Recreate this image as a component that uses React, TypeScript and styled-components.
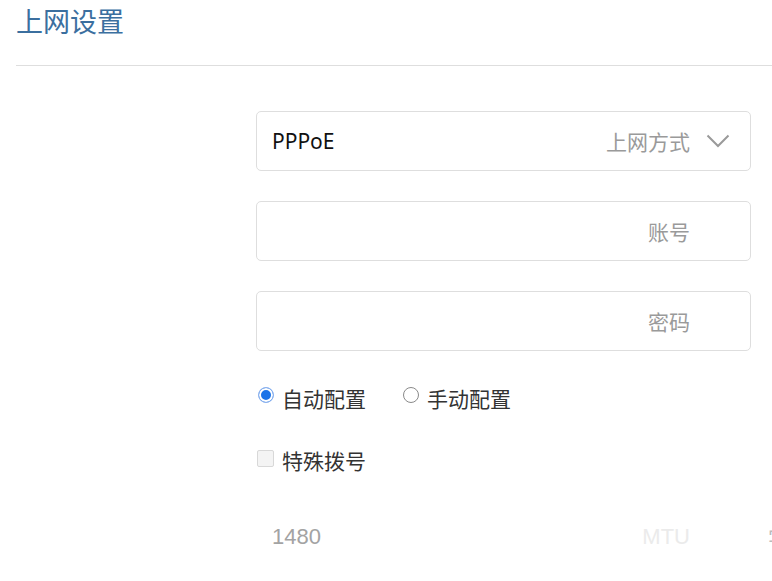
import styled, { createGlobalStyle } from "styled-components";

const GlobalStyle = createGlobalStyle`
  html, body {
    margin: 0;
    padding: 0;
    background: #fff;
    overflow: hidden;
  }
  body {
    font-family: "Noto Sans", "Noto Sans CJK SC", sans-serif;
    color: #222;
  }
`;

const Page = styled.div`
  width: 772px;
  height: 581px;
  padding-left: 16px;
  box-sizing: border-box;
`;

const Header = styled.div`
  height: 65px;
  border-bottom: 1px solid #dedede;
  display: flex;
  align-items: flex-start;
`;

const Title = styled.h1`
  margin: 0;
  padding-top: 3px;
  font-family: "Noto Sans CJK SC", sans-serif;
  font-size: 27px;
  font-weight: 400;
  line-height: 36px;
  color: #3b6f9f;
`;

const Form = styled.div`
  margin: 45px 0 0 240px;
  display: flex;
  flex-direction: column;
`;

const Line = styled.div<{ $top: number }>`
  margin-top: ${(p) => p.$top}px;
  display: flex;
  align-items: center;
`;

const Field = styled.div<{ $plain?: boolean }>`
  width: 495px;
  height: 60px;
  flex-shrink: 0;
  box-sizing: border-box;
  border: 1px solid ${(p) => (p.$plain ? "transparent" : "#dedede")};
  border-radius: 5px;
  margin-bottom: 30px;
  padding: 0 20px 0 15px;
  display: flex;
  align-items: center;
  font-family: "Noto Sans CJK SC", sans-serif;
  font-size: 21px;
`;

const Value = styled.span`
  flex: 1;
  color: #111;
  font-family: "Noto Sans", sans-serif;
`;

const Hint = styled.span`
  color: #9a9a9a;
  margin-right: 40px;
`;

const SelectHint = styled.span`
  color: #9a9a9a;
  margin-right: 16px;
`;

const MtuValue = styled.span`
  flex: 1;
  font-family: "Liberation Sans", Arial, sans-serif;
  font-size: 22px;
  color: #a3a3a3;
`;

const MtuLabel = styled.span`
  font-family: "Liberation Sans", Arial, sans-serif;
  font-size: 22px;
  color: #ebebeb;
  margin-right: 40px;
`;

const Unit = styled.span`
  flex-shrink: 0;
  margin: 0 0 30px 17px;
  font-family: "Noto Sans CJK SC", sans-serif;
  font-size: 21px;
  color: #bbb;
  white-space: nowrap;
`;

const OptionRow = styled.div<{ $gap: number }>`
  height: 40px;
  margin-top: ${(p) => p.$gap}px;
  display: flex;
  align-items: center;
  gap: 35px;
`;

const Option = styled.label`
  display: flex;
  align-items: center;
  gap: 8px;
  font-family: "Noto Sans CJK SC", sans-serif;
  font-size: 21px;
  color: #333;
  padding-top: 4px;
`;

const Radio = styled.span<{ $checked?: boolean }>`
  width: 16px;
  height: 16px;
  box-sizing: border-box;
  border-radius: 50%;
  margin: -7px 0 0 2px;
  border: 1px solid ${(p) => (p.$checked ? "#8fb3ee" : "#8a8a8a")};
  background: ${(p) => (p.$checked ? "#1a73e8" : "#fff")};
  box-shadow: ${(p) => (p.$checked ? "inset 0 0 0 2px #fff" : "none")};
`;

const Check = styled.span`
  width: 17px;
  height: 17px;
  box-sizing: border-box;
  margin: -3px 0 0 1px;
  border: 1px solid #d8d8d8;
  border-radius: 2px;
  background: #f4f4f4;
`;

const Chevron = () => (
  <svg width="24" height="14" viewBox="0 0 24 14">
    <polyline
      points="1.5,1.5 12,12 22.5,1.5"
      fill="none"
      stroke="#9a9a9a"
      strokeWidth="2"
    />
  </svg>
);

function App() {
  return (
    <Page>
      <GlobalStyle />
      <Header>
        <Title>上网设置</Title>
      </Header>
      <Form>
        <Field>
          <Value>PPPoE</Value>
          <SelectHint>上网方式</SelectHint>
          <Chevron />
        </Field>
        <Field>
          <Value />
          <Hint>账号</Hint>
        </Field>
        <Field>
          <Value />
          <Hint>密码</Hint>
        </Field>
        <OptionRow $gap={-5}>
          <Option>
            <Radio $checked />
            自动配置
          </Option>
          <Option>
            <Radio />
            手动配置
          </Option>
        </OptionRow>
        <OptionRow $gap={22}>
          <Option>
            <Check />
            特殊拨号
          </Option>
        </OptionRow>
        <Line $top={29}>
          <Field $plain>
            <MtuValue>1480</MtuValue>
            <MtuLabel>MTU</MtuLabel>
          </Field>
          <Unit>字节</Unit>
        </Line>
      </Form>
    </Page>
  );
}

export default App;
